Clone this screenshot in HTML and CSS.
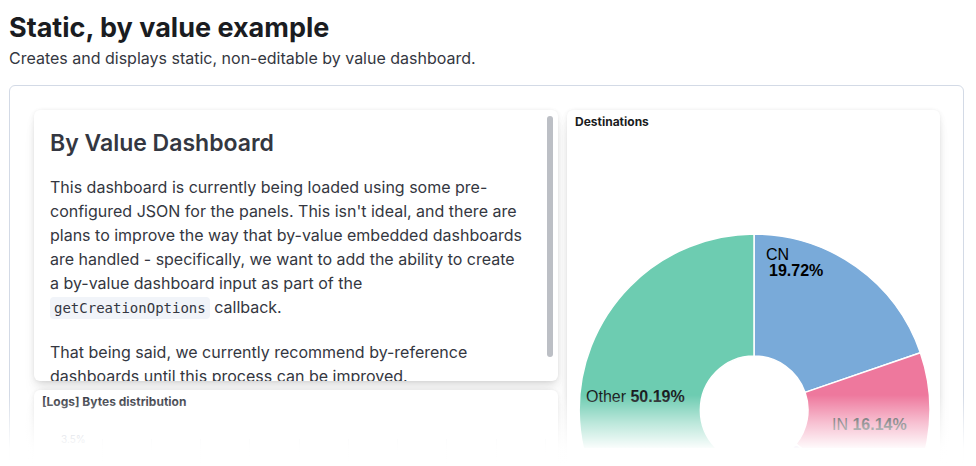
FILE: index.html
```html
<!DOCTYPE html>
<html lang="en">
<head>
<meta charset="utf-8">
<title>Static, by value example</title>
<link rel="stylesheet" href="styles.css">
</head>
<body>
<header class="page-header">
  <h1 class="page-title">Static, by value example</h1>
  <p class="page-desc">Creates and displays static, non-editable by value dashboard.</p>
</header>
<section class="dash-frame">
  <div class="dash-grid">
    <article class="panel panel-markdown">
      <div class="md-scroll">
        <h2 class="md-title">By Value Dashboard</h2>
        <p class="md-text">This dashboard is currently being loaded using some pre-configured JSON for the panels. This isn't ideal, and there are plans to improve the way that by-value embedded dashboards are handled - specifically, we want to add the ability to create a by-value dashboard input as part of the <code class="md-code">getCreationOptions</code> callback.</p>
        <p class="md-text">That being said, we currently recommend by-reference dashboards until this process can be improved.</p>
      </div>
      <span class="scroll-thumb"></span>
    </article>
    <article class="panel panel-pie">
      <h3 class="panel-title">Destinations</h3>
      <div class="pie-wrap">
        <svg class="pie" width="373" height="340" viewBox="0 0 373 340">
          <g transform="translate(187,302)" stroke="#fff" stroke-width="1.5">
            <path fill="#79AAD9" d="M0,-176 A176,176 0 0 1 166.4,-57.3 L51.1,-17.6 A54,54 0 0 0 0,-54 Z"/>
            <path fill="#EE789D" d="M166.4,-57.3 A176,176 0 0 1 136.7,110.8 L41.9,34.0 A54,54 0 0 0 51.1,-17.6 Z"/>
            <path fill="#A987D1" d="M136.7,110.8 A176,176 0 0 1 60.2,165.4 L18.5,50.7 A54,54 0 0 0 41.9,34.0 Z"/>
            <path fill="#E4A6C7" d="M60.2,165.4 A176,176 0 0 1 2.2,176 L0.7,54 A54,54 0 0 0 18.5,50.7 Z"/>
            <path fill="#6DCCB1" d="M2.2,176 A176,176 0 0 1 0,-176 L0,-54 A54,54 0 0 0 0.7,54 Z"/>
          </g>
          <text class="lbl" x="199" y="152">CN</text>
          <text class="lbl lbl-b" x="202" y="168">19.72%</text>
          <text class="lbl lbl-dark" x="19" y="294">Other <tspan class="lbl-b">50.19%</tspan></text>
          <text class="lbl lbl-dark" x="265" y="322">IN <tspan class="lbl-b">16.14%</tspan></text>
        </svg>
      </div>
    </article>
    <article class="panel panel-bytes">
      <h3 class="panel-title panel-title-muted">[Logs] Bytes distribution</h3>
      <div class="bytes-chart">
        <span class="axis-label">3.5%</span>
        <div class="grid-lines">
          <i></i><i></i><i></i><i></i><i></i><i></i><i></i><i></i><i></i><i></i>
        </div>
      </div>
    </article>
  </div>
</section>
<div class="fade"></div>
</body>
</html>
```

FILE: styles.css
```css
* { box-sizing: border-box; }

html, body {
  margin: 0;
  background: #fff;
}

html {
  height: 466px;
  overflow: hidden;
}

body {
  padding: 8px 8px 0;
  font-family: Inter, "Noto Sans", sans-serif;
  color: #343741;
  height: 466px;
  overflow: hidden;
  position: relative;
}

.page-header {
  padding-left: 1px;
}

.page-title {
  margin: 0;
  font-size: 27px;
  line-height: 40px;
  font-weight: 700;
  color: #1a1c21;
}

.page-desc {
  margin: 0;
  font-size: 16px;
  line-height: 21px;
  color: #343741;
}

.dash-frame {
  margin-top: 16px;
  margin-left: 1px;
  width: 955px;
  height: 381px;
  border: 1px solid #d3dae6;
  border-radius: 6px;
  padding: 24px 23px 0 24px;
  overflow: hidden;
}

.dash-grid {
  display: grid;
  grid-template-columns: 524px 373px;
  grid-template-rows: 271px 120px;
  column-gap: 9px;
  row-gap: 9px;
}

.panel {
  position: relative;
  background: #fff;
  border-radius: 6px;
  box-shadow: 0 0.9px 4px -1px rgba(0,0,0,0.08),
              0 2.6px 8px -1px rgba(0,0,0,0.06),
              0 5.7px 12px -1px rgba(0,0,0,0.05),
              0 15px 15px -1px rgba(0,0,0,0.04);
  overflow: hidden;
}

.panel-markdown {
  grid-column: 1;
  grid-row: 1;
}

.md-scroll {
  height: 100%;
  overflow: hidden;
  padding: 15px 33px 24px 16px;
}

.scroll-thumb {
  position: absolute;
  top: 6px;
  right: 5px;
  width: 6px;
  height: 241px;
  border-radius: 3px;
  background: #bcbfc5;
}

.md-title {
  margin: 0 0 14px;
  font-size: 23px;
  line-height: 36px;
  font-weight: 600;
  color: #343741;
}

.md-text {
  margin: 0 0 20px;
  font-size: 16px;
  line-height: 24px;
  color: #343741;
}

.md-code {
  font-family: "DejaVu Sans Mono", "Liberation Mono", monospace;
  font-size: 14px;
  background: #f1f4f9;
  color: #343741;
  padding: 3px 4px;
  border-radius: 4px;
}

.panel-pie {
  grid-column: 2;
  grid-row: 1 / span 2;
  display: flex;
  flex-direction: column;
}

.panel-title {
  margin: 0;
  padding: 5px 8px 0;
  font-size: 12px;
  line-height: 14px;
  font-weight: 700;
  color: #1a1c21;
}

.panel-title-muted {
  color: #343741;
}

.pie-wrap {
  flex: 1;
}

.pie {
  display: block;
  margin-top: -21px;
}

.lbl {
  font-family: "Liberation Sans", Arial, sans-serif;
  font-size: 16px;
  fill: #000;
}
.lbl-b {
  font-weight: 700;
}
.lbl-dark {
  fill: #1a1c21;
}

.panel-bytes {
  grid-column: 1;
  grid-row: 2;
}

.bytes-chart {
  display: flex;
  align-items: flex-start;
  padding: 24px 0 0 27px;
  gap: 8px;
}

.axis-label {
  font-size: 10px;
  color: #98a2b3;
  line-height: 12px;
}

.grid-lines {
  flex: 1;
  display: flex;
  justify-content: space-between;
  padding: 6px 12px 0 8px;
}

.grid-lines i {
  display: block;
  width: 1px;
  height: 40px;
  background: #eef0f3;
}

.fade {
  position: absolute;
  left: 0;
  right: 0;
  top: 395px;
  height: 71px;
  background: linear-gradient(to bottom, rgba(255,255,255,0) 0%, rgba(255,255,255,0.55) 40%, rgba(255,255,255,0.97) 75%, #fff 100%);
  pointer-events: none;
}
```
